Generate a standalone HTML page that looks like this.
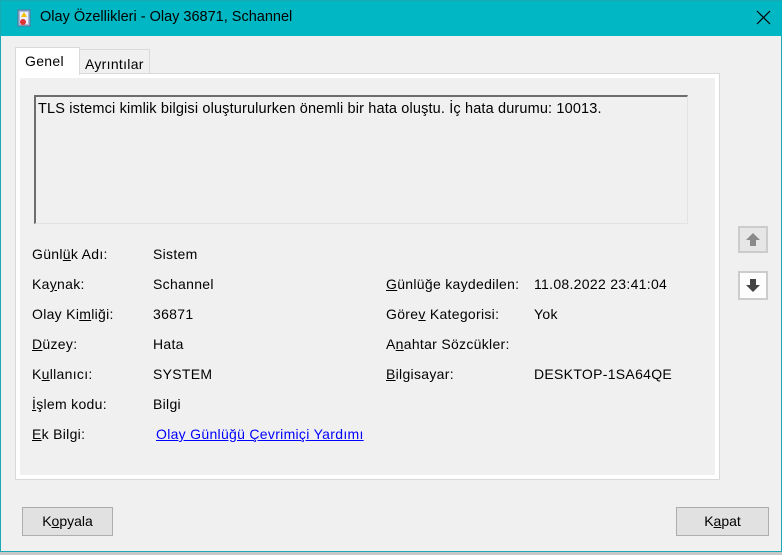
<!DOCTYPE html>
<html><head><meta charset="utf-8"><style>
*{margin:0;padding:0;box-sizing:border-box}
body{width:782px;height:555px;overflow:hidden;background:#c8c8c8;font-family:"Liberation Sans",sans-serif;font-size:14px;color:#000;position:relative}
.win{position:absolute;left:0;top:0;width:782px;height:552px;background:#f0f0f0;border:1px solid #1aa9b3}
.title{position:absolute;left:0;top:0;width:782px;height:35px;background:#00b7c3}
.t{position:absolute;white-space:nowrap;letter-spacing:0.3px}
u{text-decoration:underline}
.btn{position:absolute;height:29px;background:#e1e1e1;border:1px solid #adadad;text-align:center;line-height:27px}
</style></head><body>
<div class="win">
<div class="title">
 <svg style="position:absolute;left:15px;top:8px" width="16" height="18" viewBox="0 0 16 18"><rect x="2" y="1" width="12" height="16" fill="#a7b9d8" stroke="#5a6f9a"/><rect x="4" y="3" width="8" height="12" fill="#eef"/><path d="M8 3l3 5H5z" fill="#f2c200"/><circle cx="7" cy="13" r="3" fill="#d33"/></svg>
 <div class="t" style="left:39px;top:8px;font-size:14.5px;letter-spacing:0">Olay Özellikleri - Olay 36871, Schannel</div>
 <svg style="position:absolute;left:755px;top:9px" width="15" height="15"><path d="M1 1L14 14M14 1L1 14" stroke="#000" stroke-width="1.2"/></svg>
</div>
<div style="position:absolute;left:14px;top:46px;width:65px;height:28px;background:#fff;border:1px solid #d9d9d9;border-bottom:none;z-index:2"></div>
<div class="t" style="left:24px;top:52px;font-size:14px;z-index:3">Genel</div>
<div style="position:absolute;left:78px;top:48px;width:71px;height:25px;background:#f0f0f0;border:1px solid #d9d9d9;border-bottom:none"></div>
<div class="t" style="left:84px;top:55px;font-size:14px">Ayrıntılar</div>
<div style="position:absolute;left:14px;top:72px;width:705px;height:407px;border:1px solid #d9d9d9;background:#fff"></div>
<div style="position:absolute;left:19px;top:77px;width:695px;height:397px;background:#f0f0f0"></div>
<div style="position:absolute;left:33px;top:94px;width:654px;height:129px;border-top:2px solid #6d6d6d;border-left:2px solid #6d6d6d;border-right:1px solid #e3e3e3;border-bottom:1px solid #e3e3e3;background:#f0f0f0"></div>
<div class="t" style="left:37px;top:100px;font-size:14.5px;letter-spacing:0.15px">TLS istemci kimlik bilgisi oluşturulurken önemli bir hata oluştu. İç hata durumu: 10013.</div>
<div class="t" style="left:31px;top:245px">Günl<u>ü</u>k Adı:</div><div class="t" style="left:152px;top:245px">Sistem</div>
<div class="t" style="left:31px;top:275px">Ka<u>y</u>nak:</div><div class="t" style="left:152px;top:275px">Schannel</div>
<div class="t" style="left:31px;top:305px">Olay Ki<u>m</u>liği:</div><div class="t" style="left:152px;top:305px">36871</div>
<div class="t" style="left:31px;top:335px"><u>D</u>üzey:</div><div class="t" style="left:152px;top:335px">Hata</div>
<div class="t" style="left:31px;top:365px">K<u>u</u>llanıcı:</div><div class="t" style="left:152px;top:365px">SYSTEM</div>
<div class="t" style="left:31px;top:395px"><u>İ</u>şlem kodu:</div><div class="t" style="left:152px;top:395px">Bilgi</div>
<div class="t" style="left:31px;top:425px"><u>E</u>k Bilgi:</div><div class="t" style="left:155px;top:425px;color:#0000ff;text-decoration:underline">Olay Günlüğü Çevrimiçi Yardımı</div>
<div class="t" style="left:385px;top:275px"><u>G</u>ünlüğe kaydedilen:</div><div class="t" style="left:533px;top:275px">11.08.2022 23:41:04</div>
<div class="t" style="left:385px;top:305px">Göre<u>v</u> Kategorisi:</div><div class="t" style="left:533px;top:305px">Yok</div>
<div class="t" style="left:385px;top:335px">A<u>n</u>ahtar Sözcükler:</div>
<div class="t" style="left:385px;top:365px"><u>B</u>ilgisayar:</div><div class="t" style="left:533px;top:365px">DESKTOP-1SA64QE</div>
<div style="position:absolute;left:737px;top:225px;width:30px;height:27px;background:#e6e6e6;border:2px solid #cccccc"></div>
<svg style="position:absolute;left:744px;top:231px" width="16" height="15"><path d="M8 1L15 8H11V14H5V8H1Z" fill="#8a8a8a"/></svg>
<div style="position:absolute;left:737px;top:270px;width:30px;height:29px;background:#fdfdfd;border:2px solid #cccccc"></div>
<svg style="position:absolute;left:744px;top:277px" width="16" height="15"><path d="M5 1H11V7H15L8 14L1 7H5Z" fill="#444"/></svg>
<div class="btn" style="left:21px;top:506px;width:91px">K<u>o</u>pyala</div>
<div class="btn" style="left:675px;top:506px;width:93px">K<u>a</u>pat</div>
</div>
</body></html>
